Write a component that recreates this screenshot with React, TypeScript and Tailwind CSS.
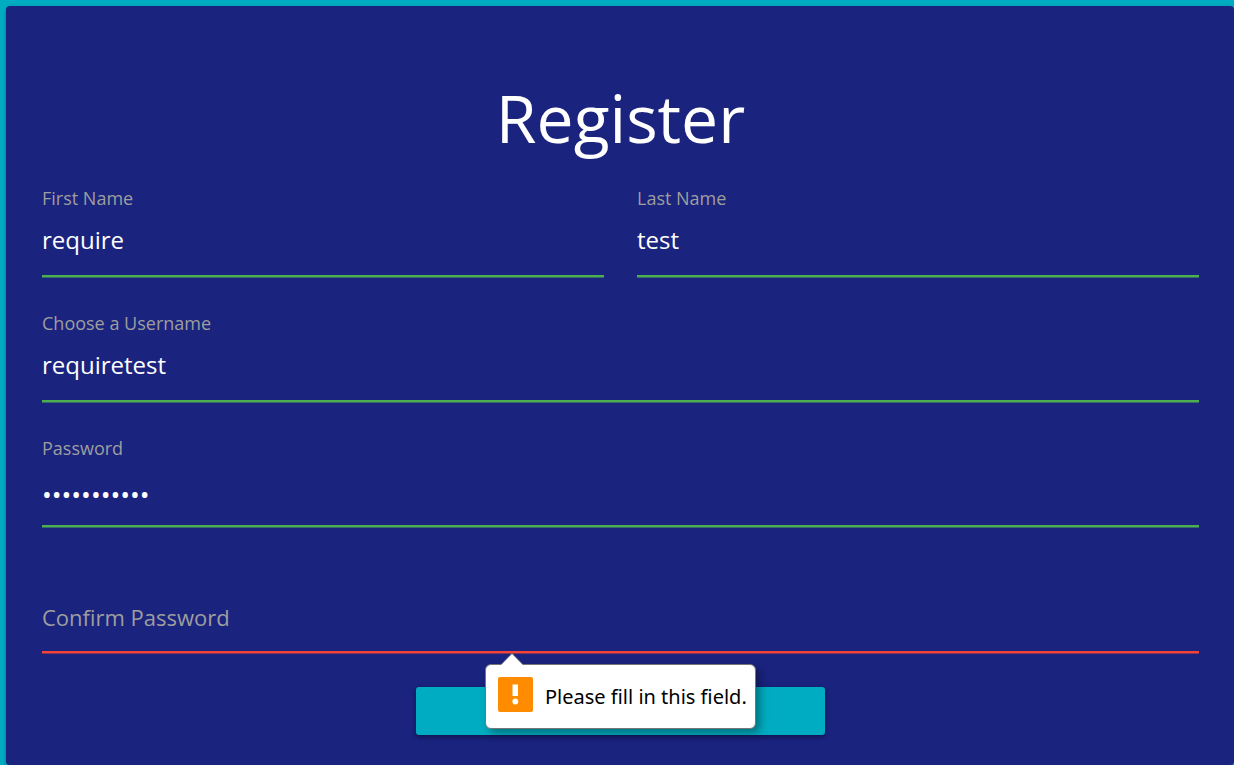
import { useState } from "react";

type FieldProps = {
  id: string;
  label: string;
  initial: string;
  type?: "text" | "password";
};

const inputStyles = {
  text: "pb-[7px] text-2xl",
  password: "pt-0.5 text-[26px]",
};

function Field({ id, label, initial, type = "text" }: FieldProps) {
  const [value, setValue] = useState(initial);
  return (
    <div className="flex min-w-0 flex-1 flex-col">
      <label htmlFor={id} className="text-lg leading-6 text-[#9e9e9e]">
        {label}
      </label>
      <input
        id={id}
        type={type}
        value={value}
        onChange={(e) => setValue(e.target.value)}
        className={`h-[67px] w-full border-b-2 border-[#4caf50] bg-transparent text-white shadow-[0_1px_0_rgba(76,175,80,0.5)] outline-none ${inputStyles[type]}`}
      />
    </div>
  );
}

function ValidationBubble() {
  return (
    <div
      role="alert"
      className="absolute top-full left-[443px] z-10 mt-[11px] flex h-[65px] w-[271px] items-center gap-3 rounded-md border border-[#767676] bg-white px-3 font-['Noto_Sans',sans-serif] text-xl whitespace-nowrap text-black shadow-[4px_4px_8px_rgba(0,0,0,0.35)]"
    >
      <svg
        className="absolute -top-3 left-3.5"
        width="24"
        height="13"
        viewBox="0 0 24 13"
        aria-hidden="true"
      >
        <path d="M0 13 L12 0.5 L24 13 Z" fill="#fff" />
        <path d="M0.5 12 L12 0.5 L23.5 12" fill="none" stroke="#767676" strokeWidth="0.7" />
      </svg>
      <svg className="mb-1 shrink-0" width="35" height="35" viewBox="0 0 35 35" aria-hidden="true">
        <rect width="35" height="35" rx="2" fill="#ff8c00" />
        <rect x="14.5" y="7.5" width="5.5" height="11.5" fill="#fff" />
        <circle cx="17.3" cy="24.5" r="2.9" fill="#fff" />
      </svg>
      <span>Please fill in this field.</span>
    </div>
  );
}

export default function App() {
  const [confirm, setConfirm] = useState("");
  return (
    <div className="flex min-h-screen flex-col bg-[#00acc1] pt-1.5 pl-1.5 font-['Open_Sans',sans-serif]">
      <main className="flex-1 rounded-sm bg-[#1a237e] pt-[72px] pr-[35px] pb-[30px] pl-9 shadow-[0_2px_4px_rgba(0,0,0,0.3)]">
        <h1 className="text-center text-[66px] leading-[78px] text-white">Register</h1>
        <form className="mt-[30px] flex flex-col gap-[34px]" noValidate>
          <div className="flex gap-[33px]">
            <Field id="first-name" label="First Name" initial="require" />
            <Field id="last-name" label="Last Name" initial="test" />
          </div>
          <Field id="username" label="Choose a Username" initial="requiretest" />
          <Field id="password" label="Password" initial="passwordabc" type="password" />
          <div className="relative grid pt-6">
            <label
              htmlFor="confirm"
              className="pointer-events-none col-start-1 row-start-1 self-center pb-1 text-[22px] leading-8 text-[#9e9e9e]"
            >
              {confirm ? "" : "Confirm Password"}
            </label>
            <input
              id="confirm"
              type="password"
              required
              aria-invalid="true"
              value={confirm}
              onChange={(e) => setConfirm(e.target.value)}
              className="col-start-1 row-start-1 h-[68px] w-full border-b-2 border-[#f44336] bg-transparent text-2xl text-white shadow-[0_1px_0_rgba(244,67,54,0.5)] outline-none"
            />
            <ValidationBubble />
          </div>
          <button
            type="submit"
            aria-label="Register"
            className="h-12 w-[409px] max-w-full self-center rounded-[3px] bg-[#00acc1] shadow-[0_2px_5px_rgba(0,0,0,0.4)]"
          />
        </form>
      </main>
    </div>
  );
}
